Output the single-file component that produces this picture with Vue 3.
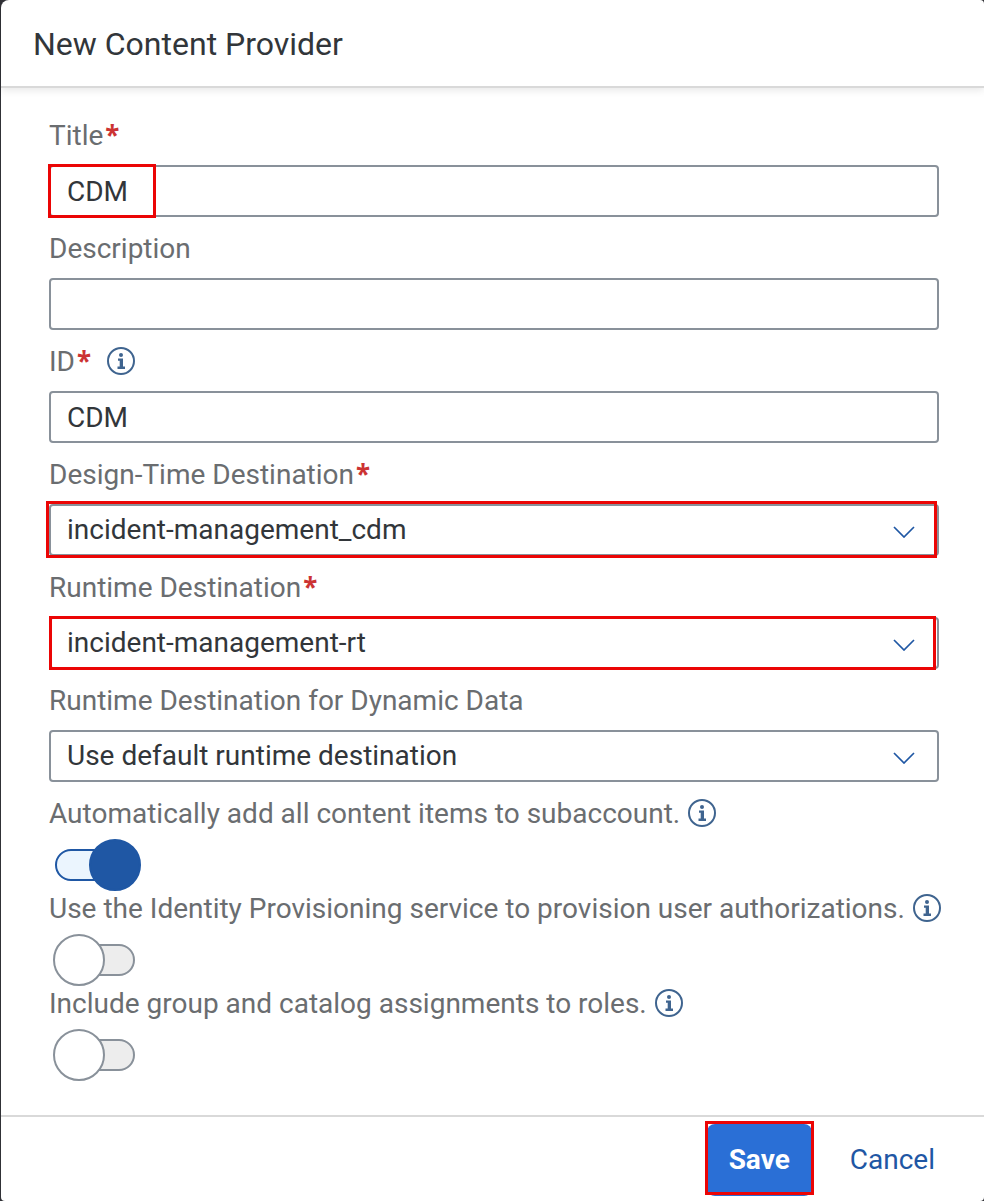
<script setup>
import { ref, reactive } from 'vue'

const title = ref('CDM')
const description = ref('')
const id = ref('CDM')

const destinations = reactive([
  { id: 'design', label: 'Design-Time Destination', required: true, value: 'incident-management_cdm', mark: 'mark-design' },
  { id: 'runtime', label: 'Runtime Destination', required: true, value: 'incident-management-rt', mark: 'mark-runtime' },
  { id: 'dynamic', label: 'Runtime Destination for Dynamic Data', required: false, value: 'Use default runtime destination', mark: '' },
])

const switches = reactive([
  { id: 'auto-add', label: 'Automatically add all content items to subaccount.', on: true },
  { id: 'provisioning', label: 'Use the Identity Provisioning service to provision user authorizations.', on: false },
  { id: 'assignments', label: 'Include group and catalog assignments to roles.', on: false },
])
</script>

<template>
  <form class="dialog" @submit.prevent>
    <header class="header">
      <h1>New Content Provider</h1>
    </header>

    <main class="content">
      <div class="field">
        <div class="label-row">
          <label for="title">Title</label><span class="star">*</span>
        </div>
        <div class="control">
          <input id="title" v-model="title" class="box" type="text" required />
          <span class="mark mark-title"></span>
        </div>
      </div>

      <div class="field">
        <div class="label-row">
          <label for="description">Description</label>
        </div>
        <div class="control">
          <input id="description" v-model="description" class="box" type="text" />
        </div>
      </div>

      <div class="field">
        <div class="label-row">
          <label for="id">ID</label><span class="star">*</span>
          <button class="info" type="button" aria-label="More information">
            <svg viewBox="0 0 28 28">
              <circle cx="14" cy="14" r="13" />
              <circle class="solid" cx="14" cy="8" r="2" />
              <path class="solid" d="M11 11.500h5v8h2v2.500h-7.500v-2.500h2.200v-5.800h-1.700z" />
            </svg>
          </button>
        </div>
        <div class="control">
          <input id="id" v-model="id" class="box" type="text" required />
        </div>
      </div>

      <div v-for="d in destinations" :key="d.id" class="field">
        <div class="label-row">
          <label :for="d.id">{{ d.label }}</label><span v-if="d.required" class="star">*</span>
        </div>
        <div class="control">
          <select :id="d.id" v-model="d.value" class="box">
            <option>{{ d.value }}</option>
          </select>
          <svg class="chevron" viewBox="0 0 22 12"><path d="M1 1L11 11L21 1" /></svg>
          <span v-if="d.mark" class="mark" :class="d.mark"></span>
        </div>
      </div>

      <div class="switches">
        <div v-for="s in switches" :key="s.id" class="switch-field">
          <div class="switch-label">
            <label :for="s.id">{{ s.label }}</label>
            <button class="info" type="button" aria-label="More information">
              <svg viewBox="0 0 28 28">
                <circle cx="14" cy="14" r="13" />
                <circle class="solid" cx="14" cy="8" r="2" />
                <path class="solid" d="M11 11.500h5v8h2v2.500h-7.500v-2.500h2.200v-5.800h-1.700z" />
              </svg>
            </button>
          </div>
          <input :id="s.id" v-model="s.on" class="switch" type="checkbox" role="switch" />
        </div>
      </div>
    </main>

    <footer class="footer">
      <div class="save-wrap">
        <button class="btn save" type="submit">Save</button>
        <span class="mark mark-save"></span>
      </div>
      <button class="btn cancel" type="button">Cancel</button>
    </footer>
  </form>
</template>

<style>
body {
  background: #303136;
}
</style>

<style scoped>
.dialog {
  display: flex;
  flex-direction: column;
  min-height: 100vh;
  margin-left: 1px;
  border-radius: 8px 4px 4px 4px;
  background: #fff;
  color: #32363a;
  font: 28px/34px Roboto, "Noto Sans", sans-serif;
}
.dialog,
.dialog * {
  box-sizing: border-box;
}
.header {
  padding: 23px 32px 21px;
  border-bottom: 2px solid #d9d9d9;
  box-shadow: 0 2px 8px rgba(0, 0, 0, 0.1);
}
h1 {
  margin: 0;
  font-size: 32px;
  line-height: 42px;
  font-weight: 400;
}
.content {
  flex: 1;
  padding: 16px 45px 34px 48px;
}
.label-row {
  display: flex;
  align-items: center;
  height: 61px;
  color: #6a6d70;
}
label {
  padding-top: 2px;
  line-height: 32px;
}
.star {
  margin-left: 2px;
  color: #c33;
  font: 700 26px/34px "Noto Sans", sans-serif;
}
.info {
  display: flex;
  flex: none;
  margin-left: 16px;
  padding: 0;
  border: 0;
  background: none;
}
.info svg {
  width: 28px;
  height: 28px;
  fill: none;
  stroke: #3f648f;
  stroke-width: 2;
}
.info .solid {
  fill: #3f648f;
  stroke: none;
}
.control {
  position: relative;
}
.box {
  display: block;
  width: 100%;
  height: 52px;
  margin: 0;
  padding: 0 16px;
  border: 2px solid #89919a;
  border-radius: 4px;
  background: #fff;
  color: #32363a;
  font: inherit;
  appearance: none;
  outline: none;
}
.chevron {
  position: absolute;
  right: 24px;
  top: 22px;
  width: 22px;
  height: 12px;
  fill: none;
  stroke: #1f57a4;
  stroke-width: 1.7;
  pointer-events: none;
}
.mark {
  position: absolute;
  border: 3px solid #eb0505;
  pointer-events: none;
}
.mark-title {
  left: -1px;
  top: -1px;
  bottom: -1px;
  width: 108px;
}
.mark-design {
  inset: -3px 2px -2px -3px;
}
.mark-runtime {
  inset: -1px 3px -1px 0;
}
.mark-save {
  inset: -3px -2px 1px -2px;
}
.switches {
  padding-top: 14px;
}
.switch-label {
  display: flex;
  align-items: center;
  color: #6a6d70;
  white-space: nowrap;
}
.switch-label .info {
  margin-left: 8px;
}
.switch {
  position: relative;
  display: block;
  width: 82px;
  height: 52px;
  margin: 9px 0 0 4px;
  appearance: none;
}
.switch::before {
  content: "";
  position: absolute;
  inset: 10px 0 10px 2px;
  box-sizing: border-box;
  border: 2px solid #89919a;
  border-radius: 16px;
  background: #ededed;
}
.switch::after {
  content: "";
  position: absolute;
  left: 0;
  top: 0;
  width: 52px;
  height: 52px;
  box-sizing: border-box;
  border: 2px solid #89919a;
  border-radius: 50%;
  background: #fff;
}
.switch:checked::before {
  border-color: #1f57a4;
  background: #ebf5fe;
}
.switch:checked::after {
  left: 36px;
  border-color: #1f57a4;
  background: #1f57a4;
}
.footer {
  display: flex;
  justify-content: flex-end;
  gap: 16px;
  padding: 7px 27px 5px;
  border-top: 2px solid #d9d9d9;
}
.save-wrap {
  position: relative;
}
.btn {
  height: 72px;
  padding: 0 22px;
  border: 0;
  border-radius: 8px;
  font: inherit;
}
.save {
  background: #2a6fd6;
  color: #fff;
  font-weight: 700;
}
.cancel {
  background: none;
  color: #1f57a4;
}
</style>
